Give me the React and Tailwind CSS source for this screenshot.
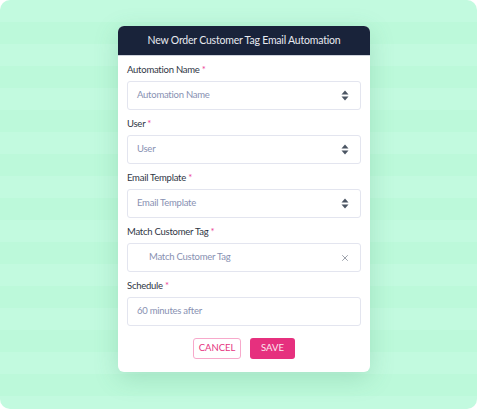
import { X } from 'lucide-react';

const FONT = { fontFamily: 'Lato, "Noto Sans", sans-serif' };

function Caret() {
  return (
    <svg width="8" height="11" viewBox="0 0 8 11" className="text-[#4b5563]">
      <path d="M4 0.5 L7.5 4.5 H0.5 Z" fill="currentColor" />
      <path d="M4 10.5 L7.5 6.5 H0.5 Z" fill="currentColor" />
    </svg>
  );
}

function Field({ label, placeholder, kind }) {
  return (
    <div className="flex flex-col">
      <label className="text-[9.5px] tracking-[-0.25px] leading-[14px] text-[#2f3645] h-[14px]">
        {label} <span className="text-[#ec4899]">*</span>
      </label>
      <div className="mt-[4px] h-[29px] border border-[#e3e5ef] rounded-[3px] flex items-center justify-between pr-[11px]">
        <span className={`text-[9.5px] tracking-[-0.25px] text-[#8891b2] ${kind === 'tag' ? 'pl-[21px]' : 'pl-[9px]'}`}>
          {placeholder}
        </span>
        {kind === 'select' && <Caret />}
        {kind === 'tag' && <X size={10} strokeWidth={1.6} className="text-[#6b7280] mr-[-1px]" />}
      </div>
    </div>
  );
}

export default function App() {
  return (
    <div
      style={FONT}
      className="w-[477px] h-[409px] rounded-[10px] overflow-hidden bg-[#bff9db] bg-[repeating-linear-gradient(180deg,#c2fadf_0px,#c2fadf_22px,#bcf9da_22px,#bcf9da_44px)] pl-[118px] pt-[26px]"
    >
      <div className="w-[252px] bg-white rounded-[6px] overflow-hidden shadow-[0_6px_24px_rgba(60,140,100,0.22)]">
        <div className="h-[30px] bg-[#19233a] flex items-center justify-center text-[10.5px] tracking-[-0.2px] text-[#e8eaf0] border-b border-[#cfd3dc]">
          New Order Customer Tag Email Automation
        </div>
        <div className="px-[9px] pt-[7px] pb-[13px] flex flex-col gap-[7px]">
          <Field label="Automation Name" placeholder="Automation Name" kind="select" />
          <Field label="User" placeholder="User" kind="select" />
          <Field label="Email Template" placeholder="Email Template" kind="select" />
          <Field label="Match Customer Tag" placeholder="Match Customer Tag" kind="tag" />
          <Field label="Schedule" placeholder="60 minutes after" kind="text" />
          <div className="flex justify-center gap-[9px] mt-[5px]">
            <button className="w-[48px] h-[21px] border border-[#f7a9cb] rounded-[3px] text-[9.5px] text-[#e5337f] bg-white">
              CANCEL
            </button>
            <button className="w-[45px] h-[21px] rounded-[3px] text-[9.5px] text-[#fde7f0] bg-[#e6307e]">
              SAVE
            </button>
          </div>
        </div>
      </div>
    </div>
  );
}
